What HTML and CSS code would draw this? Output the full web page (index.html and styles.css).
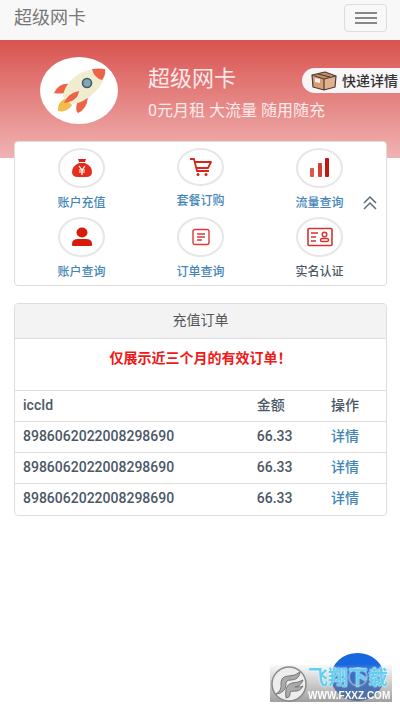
FILE: index.html
```html
<!DOCTYPE html>
<html lang="zh-CN">
<head>
<meta charset="utf-8">
<meta name="viewport" content="width=device-width, initial-scale=1">
<title>超级网卡</title>
<link rel="stylesheet" href="styles.css">
</head>
<body>
<header class="navbar">
  <a class="brand" href="#">超级网卡</a>
  <button class="toggle" type="button" aria-label="菜单"><span></span><span></span><span></span></button>
</header>
<main>
  <section class="hero">
    <div class="avatar">
      <svg viewBox="0 0 78 67" width="78" height="67" aria-hidden="true">
        <path d="M31 27Q19 25 14 36Q19 37 24 36Z" fill="#ed6348"/>
        <path d="M37 46Q35 54 38 56Q47 52 48 40Z" fill="#ed6348"/>
        <path d="M26 41Q17 45 18 54Q27 56 32 48Z" fill="#f2bd4c"/>
        <path d="M23 38Q27 22 43 15Q54 10 65 12Q66 25 54 36Q43 46 33 47Q24 45 23 38Z" fill="#f0edcf"/>
        <path d="M52 12Q58 11 65 12Q66 18 62 23Q54 21 52 12Z" fill="#ed6348"/>
        <circle cx="47" cy="26" r="4.5" fill="#86a5b2" stroke="#3f5b70" stroke-width="1.6"/>
        <path d="M24 46Q28 36 39 34Q38 44 24 46Z" fill="#ed6348"/>
      </svg>
    </div>
    <div class="intro">
      <h1>超级网卡</h1>
      <p>0元月租 大流量 随用随充</p>
    </div>
    <a class="express" href="#">
      <svg viewBox="0 0 26 20" width="26" height="20" aria-hidden="true">
        <path d="M1 4L14 1L25 5L13 8Z" fill="#c99065"/>
        <path d="M1 4L13 8V19L2 16Z" fill="#d5a078"/>
        <path d="M13 8L25 5L24 16L13 19Z" fill="#e1b18d"/>
        <path d="M1 4L14 1L25 5L24 16L13 19L2 16ZM1 4L13 8L25 5M13 8V19M7 3L19 6" fill="none" stroke="#4b3c34" stroke-width="1.2" stroke-linejoin="round"/>
        <path d="M4 7L9 8V12L4 11Z" fill="#f5efe8"/>
      </svg>
      <span>快递详情</span>
    </a>
  </section>

  <nav class="panel services">
    <a class="service" href="#"><span class="ring">
      <svg viewBox="0 0 20 20" width="20" height="20"><path d="M6 1H14L13 4H7Z" fill="#d72218"/><path d="M7 5H13Q20 8 20 14Q20 19 14 19H6Q0 19 0 14Q0 8 7 5Z" fill="#e42d1c"/><path d="M7 8L10 12L13 8M10 12V17M7 12H13M7 14H13" fill="none" stroke="#fff" stroke-width="1.2"/></svg>
    </span>账户充值</a>
    <a class="service short" href="#"><span class="ring">
      <svg viewBox="0 0 22 20" width="22" height="20"><path d="M0 2H4L7 14H19M5 5H21L18 11H6" fill="none" stroke="#d7261e" stroke-width="1.8" stroke-linejoin="round"/><circle cx="8" cy="17.500" r="1.500" fill="#d7261e"/><circle cx="16" cy="17.500" r="1.500" fill="#d7261e"/></svg>
    </span>套餐订购</a>
    <a class="service" href="#"><span class="ring">
      <svg viewBox="0 0 20 20" width="20" height="20"><rect y="10" width="4" height="9" rx="1" fill="#e05548"/><rect x="8" y="5" width="4" height="14" rx="1" fill="#dc3b30"/><rect x="15" width="4" height="19" rx="1" fill="#c5150f"/></svg>
    </span>流量查询</a>
    <a class="service" href="#"><span class="ring">
      <svg viewBox="0 0 20 20" width="20" height="20"><ellipse cx="10" cy="5.500" rx="5.500" ry="5" fill="#d81c0c"/><path d="M0 17Q0 12 6 12H14Q20 12 20 17V18Q20 19 19 19H1Q0 19 0 18Z" fill="#d81c0c"/></svg>
    </span>账户查询</a>
    <a class="service" href="#"><span class="ring">
      <svg viewBox="0 0 18 18" width="18" height="18"><rect x="1" y="1.500" width="16" height="15" rx="2" fill="none" stroke="#d83a3e" stroke-width="1.4"/><path d="M5 6H13M5 9H13M5 12H10" stroke="#d83a3e" stroke-width="1.3"/></svg>
    </span>订单查询</a>
    <a class="service dark" href="#"><span class="ring">
      <svg viewBox="0 0 26 20" width="26" height="20"><rect x="1" y="1.500" width="24" height="17" rx="1" fill="none" stroke="#d8332e" stroke-width="1.6"/><path d="M4 6H11M4 10H9M4 14H9" stroke="#d8332e" stroke-width="1.5"/><circle cx="17.500" cy="7.500" r="2.300" fill="none" stroke="#d8332e" stroke-width="1.4"/><rect x="13.500" y="11.500" width="8" height="3" rx="1.500" fill="none" stroke="#d8332e" stroke-width="1.4"/></svg>
    </span>实名认证</a>
    <button class="collapse" type="button" aria-label="收起"><svg viewBox="0 0 14 14" width="14" height="14"><path d="M1 7L7 1L13 7M1 13L7 7L13 13" fill="none" stroke="#5f6d7c" stroke-width="1.500"/></svg></button>
  </nav>

  <section class="panel orders">
    <h2>充值订单</h2>
    <p class="notice">仅展示近三个月的有效订单！</p>
    <table>
      <thead><tr><th>iccId</th><th class="amount">金额</th><th class="action">操作</th></tr></thead>
      <tbody>
        <tr><td>8986062022008298690</td><td>66.33</td><td><a href="#">详情</a></td></tr>
        <tr><td>8986062022008298690</td><td>66.33</td><td><a href="#">详情</a></td></tr>
        <tr><td>8986062022008298690</td><td>66.33</td><td><a href="#">详情</a></td></tr>
      </tbody>
    </table>
  </section>
</main>
<button class="chat" type="button" aria-label="客服"><svg viewBox="0 0 22 22" width="22" height="22"><circle cx="11" cy="11" r="9" fill="none" stroke="#8db4f7" stroke-width="2"/></svg></button>
<div class="watermark">
  <svg viewBox="0 0 38 38" width="38" height="38" aria-hidden="true">
    <circle cx="19" cy="19" r="17" fill="#ededed" stroke="#8a8a8a" stroke-width="1.500"/>
    <path d="M6 29Q12 26 11 18Q11 11 19 11Q25 11 30 7Q29 15 21 15Q15 15 16 20Q15 28 6 29Z" fill="#aaa" stroke="#777"/>
    <path d="M16 33Q14 20 22 18Q28 18 33 15Q31 21 25 22Q32 22 33 21Q30 27 24 26Q19 26 20 30Q19 33 16 33Z" fill="#aaa" stroke="#777"/>
  </svg>
  <div class="mark-text"><strong>飞翔下载</strong><span>WWW.FXXZ.COM</span></div>
</div>
</body>
</html>
```
FILE: styles.css
```css
* { box-sizing: border-box; }
body {
  margin: 0;
  min-height: 100vh;
  background: #fff;
  color: #4b5866;
  font: 14px/20px Roboto, "Noto Sans CJK SC", sans-serif;
}
a { color: #4385b8; text-decoration: none; }
button { padding: 0; cursor: pointer; }
h1, h2, p { margin: 0; }
svg { display: block; flex: none; }

.navbar {
  display: flex;
  align-items: center;
  justify-content: space-between;
  height: 40px;
  padding: 0 13px 4px 14px;
  background: #f8f8f8;
}
.brand { color: #777; font-size: 18px; }
.toggle {
  display: flex;
  flex-direction: column;
  align-items: center;
  justify-content: center;
  gap: 3px;
  width: 43px;
  height: 28px;
  border: 1px solid #ddd;
  border-radius: 4px;
  background: transparent;
}
.toggle span { width: 22px; height: 2px; background: #888; }

.hero {
  display: flex;
  align-items: flex-start;
  height: 118px;
  padding: 17px 0 0 40px;
  background: linear-gradient(#d9534f, #f0b3b3);
}
.avatar {
  flex: none;
  width: 78px;
  height: 67px;
  border-radius: 50%;
  background: #fff;
}
.intro { flex: 1; padding: 8px 0 0 30px; color: #fbeaea; white-space: nowrap; }
.intro h1 { font-size: 22px; line-height: 28px; font-weight: 400; }
.intro p { margin-top: 8px; font-size: 16px; line-height: 20px; }
.express {
  display: flex;
  flex: none;
  align-items: center;
  gap: 5px;
  height: 25px;
  margin: 11px 0 0 -60px;
  padding: 0 2px 0 9px;
  border-radius: 13px 0 0 13px;
  background: #f7f5f5;
  color: #333;
  font-weight: 500;
}

.panel {
  margin: 0 13px 0 14px;
  border: 1px solid #ddd;
  border-radius: 4px;
  background: #fff;
}
.services {
  position: relative;
  display: grid;
  grid-template-columns: repeat(3, 1fr);
  row-gap: 5px;
  margin-top: -17px;
  padding: 6px 7px 4px;
}
.service {
  display: flex;
  flex-direction: column;
  align-items: center;
  gap: 6px;
  height: 64px;
  font-size: 12px;
  line-height: 18px;
  font-weight: 500;
}
.service.dark { color: #4b5866; }
.ring {
  display: flex;
  flex: none;
  align-items: center;
  justify-content: center;
  width: 47px;
  height: 40px;
  border: 2px solid #e6e6e6;
  border-radius: 50%;
}
.short .ring { height: 38px; }
.collapse {
  position: absolute;
  top: 54px;
  right: 9px;
  border: 0;
  background: transparent;
}

.orders { margin-top: 17px; overflow: hidden; }
.orders h2 {
  height: 35px;
  border-bottom: 1px solid #ddd;
  background: #f3f3f3;
  color: #555;
  font-size: 14px;
  line-height: 32px;
  font-weight: 400;
  text-align: center;
}
.notice {
  height: 51px;
  padding-top: 9px;
  color: #f01818;
  font-weight: 700;
  text-align: center;
}
table { width: 100%; border-collapse: collapse; table-layout: fixed; }
th, td {
  height: 31px;
  padding: 0 0 2px 8px;
  border-top: 1px solid #ddd;
  font-weight: 500;
  text-align: left;
}
.amount { width: 20%; }
.action { width: 17%; }

.chat {
  position: fixed;
  right: 16px;
  bottom: 11px;
  display: flex;
  align-items: center;
  justify-content: center;
  width: 53px;
  height: 48px;
  border: 0;
  border-radius: 50%;
  background: #1767e0;
}
.watermark {
  position: fixed;
  right: 8px;
  bottom: 10px;
  display: flex;
  align-items: center;
  width: 122px;
  height: 37px;
  background: linear-gradient(rgba(190, 190, 190, .1), rgba(120, 120, 120, .7));
}
.mark-text { display: flex; flex-direction: column; color: #fff; white-space: nowrap; }
.mark-text strong {
  color: #5fd0f0;
  font-size: 20px;
  line-height: 24px;
  text-shadow: 0 0 1px #fff, 0 0 2px #fff;
}
.mark-text span { font: 700 10px/12px "Liberation Sans", sans-serif; }
```
